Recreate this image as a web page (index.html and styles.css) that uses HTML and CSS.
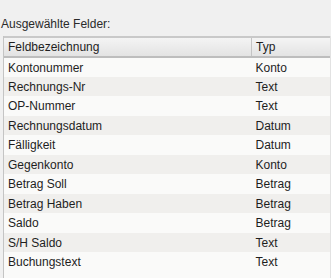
FILE: index.html
```html
<!DOCTYPE html>
<html lang="de">
<head>
  <meta charset="UTF-8" />
  <title>Ausgewählte Felder</title>
  <link rel="stylesheet" href="styles.css">
</head>
<body>
  <div class="caption">Ausgewählte Felder:</div>

  <div class="list">
    <table>
      <thead>
        <tr>
          <th class="name">Feldbezeichnung</th>
          <th class="type">Typ</th>
        </tr>
      </thead>
      <tbody>
        <tr><td>Kontonummer</td><td>Konto</td></tr>
        <tr><td>Rechnungs-Nr</td><td>Text</td></tr>
        <tr><td>OP-Nummer</td><td>Text</td></tr>
        <tr><td>Rechnungsdatum</td><td>Datum</td></tr>
        <tr><td>Fälligkeit</td><td>Datum</td></tr>
        <tr><td>Gegenkonto</td><td>Konto</td></tr>
        <tr><td>Betrag Soll</td><td>Betrag</td></tr>
        <tr><td>Betrag Haben</td><td>Betrag</td></tr>
        <tr><td>Saldo</td><td>Betrag</td></tr>
        <tr><td>S/H Saldo</td><td>Text</td></tr>
        <tr><td>Buchungstext</td><td>Text</td></tr>
      </tbody>
    </table>
  </div>
</body>
</html>
```

FILE: styles.css
```css
body {
  margin: 0;
  font-family: "Liberation Sans", Arial, sans-serif;
  font-size: 12px;
  color: #1e1e1e;
  background-color: #f0f0f0;
}
.caption {
  padding: 17px 0 0 1px;
  height: 19px;
  color: #2a2a2a;
}
.list {
  margin-left: 3px;
  height: 242px;
  overflow: hidden;
  background-color: #fafaf9;
  border-left: 1px solid #c4c4c4;
  border-right: 1px solid #e2e2e2;
}
table {
  width: 100%;
  border-collapse: collapse;
  table-layout: fixed;
}
th {
  height: 18px;
  padding: 0 0 0 4px;
  font-weight: normal;
  text-align: left;
  background: linear-gradient(#f4f4f4, #e3e3e3);
  border-top: 2px solid #c9c9c9;
  border-bottom: 2px solid #bdbdbd;
}
th.name {
  width: 243px;
  border-right: 1px solid #c4c4c4;
}
td {
  height: 19.5px;
  padding: 1px 0 0 4px;
  box-sizing: border-box;
  white-space: nowrap;
}
tbody tr:nth-child(even) {
  background-color: #f0efed;
}
```
